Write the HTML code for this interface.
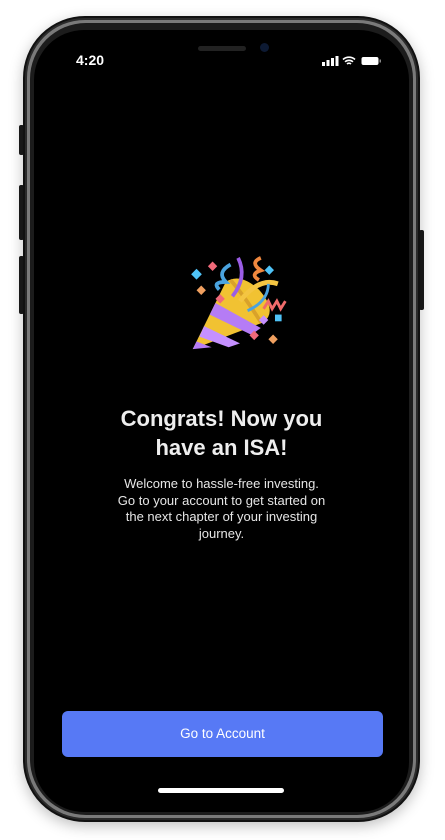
<!DOCTYPE html>
<html><head><meta charset="utf-8"><style>
html,body{margin:0;padding:0;background:#fff;width:445px;height:840px;overflow:hidden;font-family:"Liberation Sans",sans-serif}
.abs{position:absolute}
.frame{left:23px;top:16px;width:397px;height:806px;border-radius:62px;background:#2a2a2a;box-shadow:0 4px 14px rgba(0,0,0,.25);border:2px solid #111;box-sizing:border-box}
.frame2{left:27px;top:20px;width:389px;height:798px;border-radius:58px;background:#7a7a7a}
.frame3{left:30px;top:23px;width:383px;height:792px;border-radius:56px;background:#1c1c1c}
.screen{left:34px;top:30px;width:375px;height:782px;border-radius:50px;background:#000;overflow:hidden}
.btn{background:#1a1a1a;border-radius:2px}
</style></head><body>
<div class="abs btn" style="left:19px;top:125px;width:5px;height:30px"></div>
<div class="abs btn" style="left:19px;top:185px;width:5px;height:55px"></div>
<div class="abs btn" style="left:19px;top:256px;width:5px;height:58px"></div>
<div class="abs btn" style="left:419px;top:230px;width:5px;height:80px"></div>
<div class="abs frame"></div>
<div class="abs frame2"></div>
<div class="abs frame3"></div>
<div class="abs screen">
 <div class="abs" style="left:164px;top:16px;width:48px;height:5px;border-radius:3px;background:#222"></div>
 <div class="abs" style="left:226px;top:13px;width:9px;height:9px;border-radius:50%;background:#0d1a33"></div>
 <div class="abs" style="left:42px;top:22px;color:#fff;font-size:14px;font-weight:600">4:20</div>
 <svg class="abs" style="left:288px;top:25px" width="60" height="12" viewBox="0 0 60 12">
  <rect x="0" y="7" width="3" height="4" fill="#fff"/><rect x="4.5" y="5" width="3" height="6" fill="#fff"/><rect x="9" y="3" width="3" height="8" fill="#fff"/><rect x="13.5" y="1" width="3" height="10" fill="#fff"/>
  <path d="M21 4.5a9 9 0 0 1 12 0M23 6.8a6 6 0 0 1 8 0M25 9a3 3 0 0 1 4 0" stroke="#fff" stroke-width="1.6" fill="none"/>
  <rect x="39.5" y="2" width="17" height="8" rx="2" fill="#fff"/><rect x="57.5" y="4.5" width="1.5" height="3" fill="#888"/>
 </svg>
 <svg class="abs" style="left:154px;top:225px" width="104" height="98" viewBox="15 12 110 102" preserveAspectRatio="none">
  <path d="M20 110 L55 40 Q70 30 90 48 Q110 70 95 82 Z" fill="#f1c232"/>
  <path d="M44 62 L92 88 L82 95 L38 74Z" fill="#b57cf5"/>
  <path d="M32 86 L70 104 L58 108 L27 97Z" fill="#c590ff"/>
  <path d="M20 110 L24 102 L40 108Z" fill="#b57cf5"/>
  <path d="M60 38 Q75 55 92 82" stroke="#d9a22a" stroke-width="4" fill="none"/>
  <path d="M68 15 Q78 35 62 55" stroke="#9b5de5" stroke-width="4" fill="none"/>
  <path d="M60 22 Q45 30 55 40 Q40 40 48 48" stroke="#4aa3df" stroke-width="4" fill="none"/>
  <path d="M92 15 Q80 20 92 28 Q80 32 90 38" stroke="#f0883e" stroke-width="4" fill="none"/>
  <path d="M70 60 Q90 35 110 42" stroke="#f4c542" stroke-width="5" fill="none"/>
  <path d="M78 70 Q100 60 100 42" stroke="#4aa3df" stroke-width="3" fill="none"/>
  <path d="M95 68 l5 -8 l4 8 l5 -8 l4 8 l5 -8" stroke="#f06a6a" stroke-width="3" fill="none"/>
  <rect x="20" y="28" width="8" height="8" transform="rotate(45 24 32)" fill="#4fc3f7"/>
  <rect x="38" y="20" width="7" height="7" transform="rotate(45 41 23)" fill="#f06a7a"/>
  <rect x="26" y="45" width="7" height="7" transform="rotate(45 29 48)" fill="#f0a060"/>
  <rect x="98" y="24" width="7" height="7" transform="rotate(45 101 27)" fill="#4fc3f7"/>
  <rect x="46" y="54" width="7" height="7" transform="rotate(45 49 57)" fill="#f06a7a"/>
  <rect x="92" y="76" width="7" height="7" transform="rotate(45 95 79)" fill="#c590ff"/>
  <rect x="107" y="74" width="7" height="7" fill="#4fc3f7"/>
  <rect x="82" y="92" width="7" height="7" transform="rotate(45 85 95)" fill="#f06a7a"/>
  <rect x="102" y="96" width="7" height="7" transform="rotate(45 105 99)" fill="#f0a060"/>
 </svg>
 <div class="abs" style="left:0;top:374px;width:375px;text-align:center;color:#eee;font-size:22px;font-weight:bold;line-height:29px">Congrats! Now you<br>have an ISA!</div>
 <div class="abs" style="left:0;top:446px;width:375px;text-align:center;color:#e6e6e6;font-size:13px;line-height:16.5px">Welcome to hassle-free investing.<br>Go to your account to get started on<br>the next chapter of your investing<br>journey.</div>
 <div class="abs" style="left:28px;top:681px;width:321px;height:46px;border-radius:6px;background:#5779f5;color:#fff;font-size:13.5px;text-align:center;line-height:46px">Go to Account</div>
 <div class="abs" style="left:124px;top:758px;width:126px;height:5px;border-radius:3px;background:#fff"></div>
</div>
</body></html>
